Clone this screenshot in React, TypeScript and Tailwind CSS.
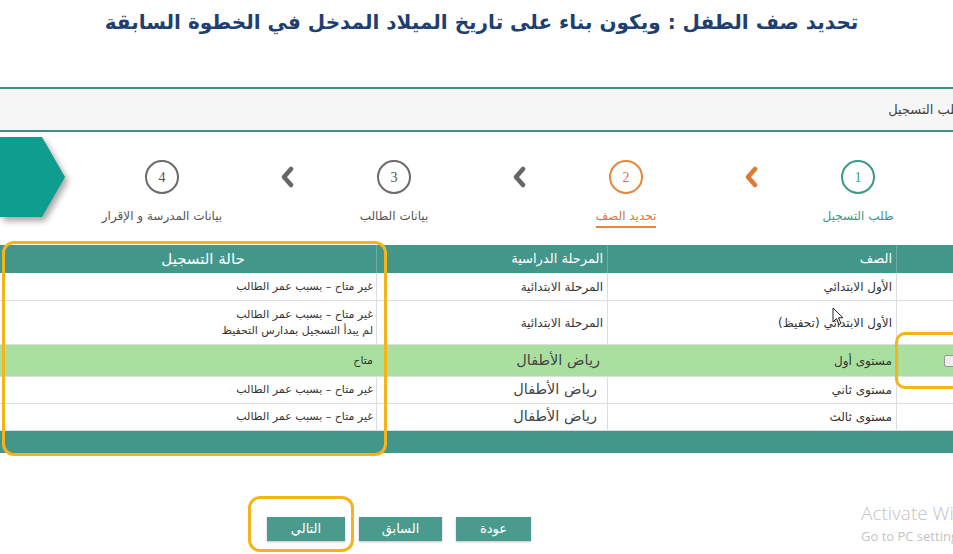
import React from 'react';

const ar = "font-['DejaVu_Sans',sans-serif]";

function Chevron({ color }: { color: string }) {
  return (
    <svg width="14" height="22" viewBox="0 0 14 22">
      <polyline points="11,3 4,11 11,19" fill="none" stroke={color} strokeWidth="4.5" strokeLinecap="round" strokeLinejoin="round" />
    </svg>
  );
}

function Step({ n, label, ring, text, active }: { n: number; label: string; ring: string; text: string; active?: boolean }) {
  return (
    <div className="w-[120px] shrink-0 flex flex-col items-center pt-[28px]">
      <div className={`w-[34px] h-[34px] rounded-full border-2 ${ring} flex items-center justify-center font-['Liberation_Serif',serif] text-[14px] ${text}`}>
        {n}
      </div>
      <div className={`mt-[13px] whitespace-nowrap text-[12px] leading-[18px] ${text} ${active ? 'border-b-2 border-[#e4873f] pb-[1px]' : ''}`}>{label}</div>
    </div>
  );
}

function ChevronCol({ color }: { color: string }) {
  return (
    <div className="w-[112px] shrink-0 flex justify-start pr-[40px] pt-[34px]">
      <Chevron color={color} />
    </div>
  );
}

const rows = [
  { cls: 'الأول الابتدائي', stage: 'المرحلة الابتدائية', big: false, status: ['غير متاح – بسبب عمر الطالب'], h: 'h-[28px]', green: false },
  { cls: 'الأول الابتدائي (تحفيظ)', stage: 'المرحلة الابتدائية', big: false, status: ['غير متاح – بسبب عمر الطالب', 'لم يبدأ التسجيل بمدارس التحفيظ'], h: 'h-[44px]', green: false },
  { cls: 'مستوى أول', stage: 'رياض الأطفال', big: true, status: ['متاح'], h: 'h-[32px]', green: true },
  { cls: 'مستوى ثاني', stage: 'رياض الأطفال', big: true, status: ['غير متاح – بسبب عمر الطالب'], h: 'h-[27px]', green: false },
  { cls: 'مستوى ثالث', stage: 'رياض الأطفال', big: true, status: ['غير متاح – بسبب عمر الطالب'], h: 'h-[27px]', green: false },
];

export default function App() {
  return (
    <div dir="rtl" className={`relative w-[953px] h-[554px] overflow-hidden bg-white ${ar}`}>
      {/* title */}
      <div className="h-[87px] pt-[6px] flex justify-center">
        <h1 className="text-[20px] font-bold text-[#1e3f6f] leading-[32px] pl-[10px]">
          تحديد صف الطفل : ويكون بناء على تاريخ الميلاد المدخل في الخطوة السابقة
        </h1>
      </div>

      {/* breadcrumb bar */}
      <div className="h-[45px] border-y-2 border-[#3d8f82] bg-[#f6f6f6] flex items-center">
        <span className="mr-[-12px] text-[13px] text-[#444]">طلب التسجيل</span>
      </div>

      {/* wizard steps */}
      <div className="h-[113px] flex items-start pr-[35px]">
        <Step n={1} label="طلب التسجيل" ring="border-[#3c9985]" text="text-[#3c9985]" />
        <ChevronCol color="#dd7a33" />
        <Step n={2} label="تحديد الصف" ring="border-[#e4873f]" text="text-[#d9772f]" active />
        <ChevronCol color="#666" />
        <Step n={3} label="بيانات الطالب" ring="border-[#6a6a6a]" text="text-[#555]" />
        <ChevronCol color="#666" />
        <Step n={4} label="بيانات المدرسة و الإقرار" ring="border-[#6a6a6a]" text="text-[#555]" />
        <div className="w-[36px] shrink-0" />
        <div className="mt-[5px] shrink-0 drop-shadow-[3px_4px_3px_rgba(0,0,0,0.35)]">
          <svg width="66" height="80" viewBox="0 0 66 80">
            <polygon points="0,0 42,0 65,40 42,80 0,80" fill="#0f9d8f" />
          </svg>
        </div>
      </div>

      {/* table */}
      <div className="grid grid-cols-[57px_289px_231px_376px] text-[12px] text-[#333]">
        <div className="h-[28px] bg-[#43978a] border-l border-[#6aaea2]" />
        <div className="h-[28px] bg-[#43978a] border-l border-[#6aaea2] text-white text-[13px] flex items-center pr-[4px]">الصف</div>
        <div className="h-[28px] bg-[#43978a] border-l border-[#6aaea2] text-white text-[13px] flex items-center pr-[4px]">المرحلة الدراسية</div>
        <div className="h-[28px] bg-[#43978a] text-white text-[15px] flex items-center justify-center pl-[30px]">حالة التسجيل</div>

        {rows.map((r, i) => {
          const bg = r.green ? 'bg-[#a9e0a0]' : 'bg-white';
          const cell = `${r.h} ${bg} border-b border-[#dedede] flex items-center`;
          return (
            <React.Fragment key={i}>
              <div className={`${cell} border-l border-[#dedede] justify-end pl-[47px]`}>
                {r.green && <div className="w-[12px] h-[12px] rounded-[2px] border border-[#999] bg-[#eee] shrink-0" />}
              </div>
              <div className={`${cell} ${r.green ? '' : 'border-l border-[#dedede]'} pr-[4px]`}>{r.cls}</div>
              <div className={`${cell} ${r.green ? '' : 'border-l border-[#dedede]'} ${r.big ? `text-[14.5px] text-[#444] ${i === 2 ? 'pr-[7px]' : 'pr-[10px]'}` : 'pr-[4px]'}`}>{r.stage}</div>
              <div className={`${cell} pr-[3px] text-[11px]`}>
                <div className="leading-[16px]">
                  {r.status.map((s) => (
                    <div key={s}>{s}</div>
                  ))}
                </div>
              </div>
            </React.Fragment>
          );
        })}
        <div className="col-span-4 h-[22px] bg-[#43978a]" />
      </div>

      {/* buttons */}
      <div className="mt-[64px] flex pr-[422px] gap-[14px] text-[13px] text-white">
        <button className="w-[75px] h-[24px] bg-[#4a9b8d] shadow-[0_1px_2px_rgba(0,0,0,0.25)]">عودة</button>
        <button className="w-[83px] h-[24px] bg-[#4a9b8d] shadow-[0_1px_2px_rgba(0,0,0,0.25)]">السابق</button>
        <button className="w-[78px] h-[24px] bg-[#4a9b8d] shadow-[0_1px_2px_rgba(0,0,0,0.25)]">التالي</button>
      </div>

      {/* highlight annotations */}
      <div className="absolute left-[2px] top-[241px] w-[385px] h-[215px] rounded-[12px] border-[3px] border-[#f4b41a]" />
      <div className="absolute left-[895px] top-[332px] w-[80px] h-[57px] rounded-[10px] border-[3px] border-[#f4b41a]" />
      <div className="absolute left-[248px] top-[496px] w-[106px] h-[56px] rounded-[12px] border-[3px] border-[#f4b41a]" />

      {/* mouse cursor */}
      <svg className="absolute left-[832px] top-[307px]" width="12" height="19" viewBox="0 0 12 19">
        <path d="M1 1 L1 15 L4.5 11.5 L7 17.5 L9 16.5 L6.5 10.8 L11 10.8 Z" fill="white" stroke="#222" strokeWidth="1" />
      </svg>

      {/* watermark */}
      <div dir="ltr" className="absolute left-[861px] top-[500px] whitespace-nowrap font-['Open_Sans',sans-serif] text-[#c3c3c3]">
        <div className="text-[19px] leading-[26px] font-light">Activate Windows</div>
        <div className="text-[13px] leading-[18px] mt-[1px]">Go to PC settings to activate Windows.</div>
      </div>
    </div>
  );
}
